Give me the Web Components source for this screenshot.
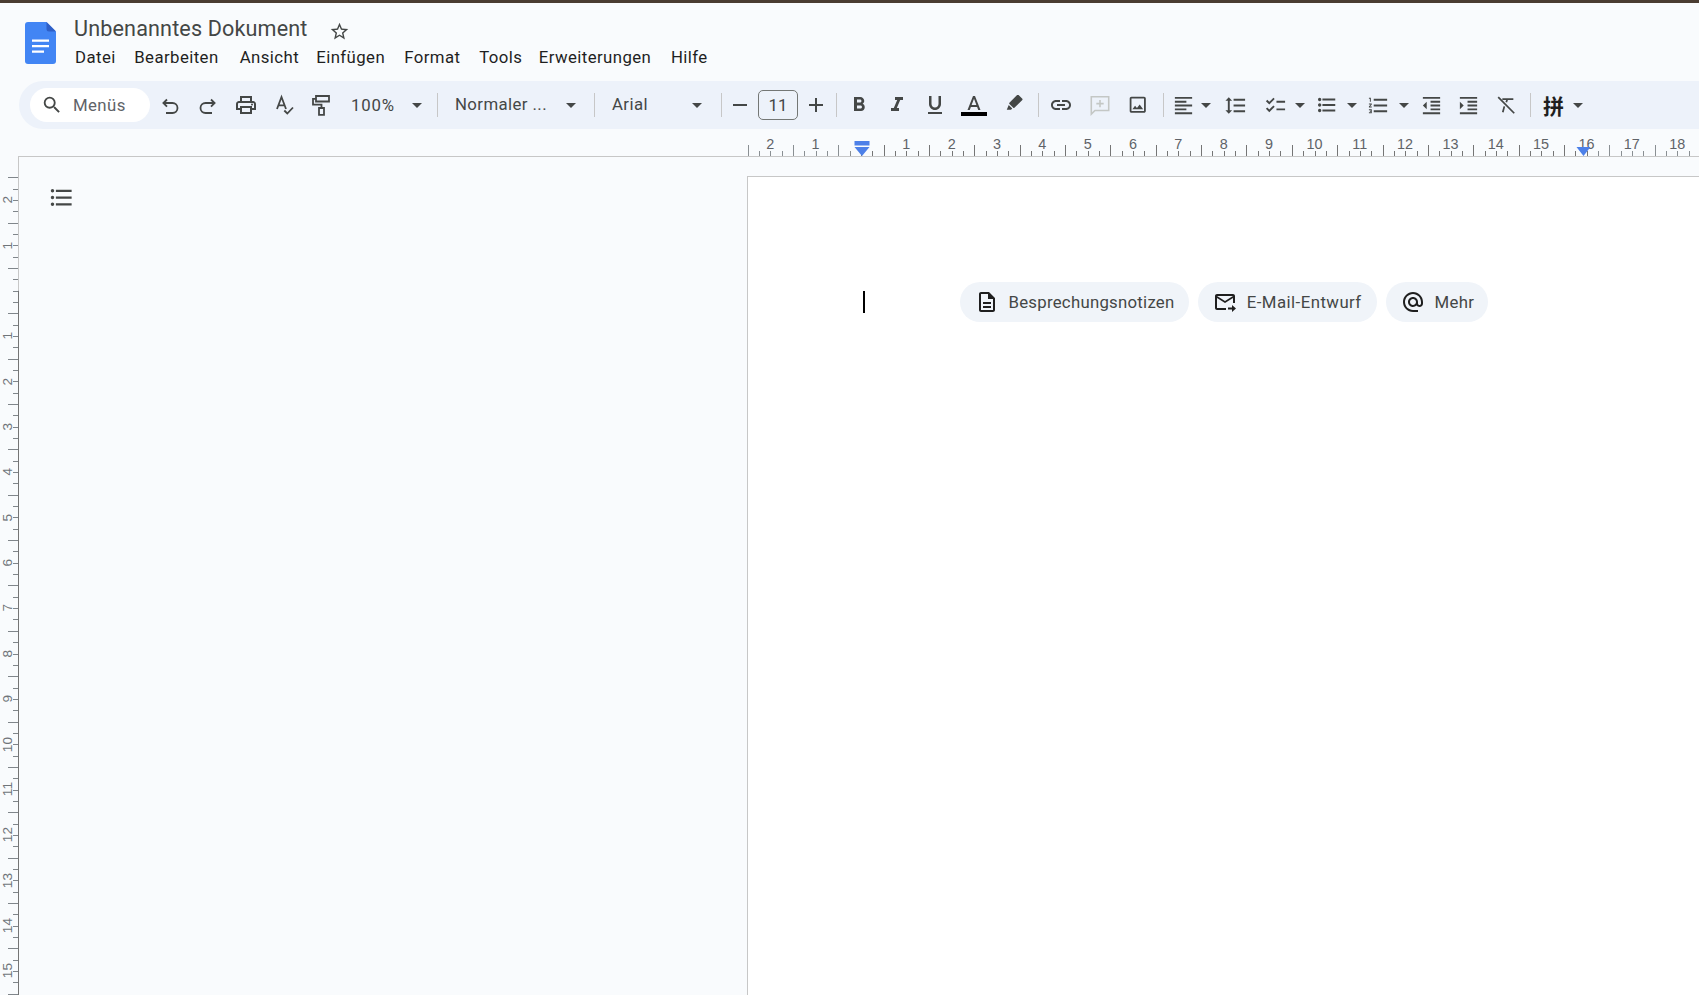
<!DOCTYPE html>
<html lang="de">
<head>
<meta charset="utf-8">
<title>Unbenanntes Dokument</title>
<style>
html,body{margin:0;padding:0;background:#f9fbfd;height:995px;overflow:hidden;font-family:Roboto,"Liberation Sans",sans-serif}
</style>
</head>
<body>
<doc-app>
  <doc-header slot="header" doc-title="Unbenanntes Dokument">
    <menu-item style="width:59.2px">Datei</menu-item><menu-item style="width:105.5px">Bearbeiten</menu-item><menu-item style="width:76.5px">Ansicht</menu-item><menu-item style="width:88px">Einfügen</menu-item><menu-item style="width:75px">Format</menu-item><menu-item style="width:59.5px">Tools</menu-item><menu-item style="width:132.2px">Erweiterungen</menu-item><menu-item style="width:40px">Hilfe</menu-item>
  </doc-header>
  <doc-toolbar slot="toolbar"></doc-toolbar>
  <doc-hruler slot="hruler"></doc-hruler>
  <doc-vruler slot="vruler"></doc-vruler>
  <doc-outline slot="outline"></doc-outline>
  <doc-page slot="page">
    <doc-chip icon="note" style="width:229px">Besprechungsnotizen</doc-chip>
    <doc-chip icon="mail" style="width:178.500px;letter-spacing:.45px">E-Mail-Entwurf</doc-chip>
    <doc-chip icon="at" style="width:102px">Mehr</doc-chip>
  </doc-page>
</doc-app>
<script>
const P = {
  search:'<path fill="currentColor" d="M15.5 14h-.79l-.28-.27A6.471 6.471 0 0 0 16 9.5 6.5 6.5 0 1 0 9.5 16c1.61 0 3.09-.59 4.23-1.57l.27.28v.79l5 4.99L20.49 19l-4.99-5zm-6 0C7.01 14 5 11.99 5 9.5S7.01 5 9.5 5 14 7.01 14 9.5 11.99 14 9.5 14z"/>',
  star:'<path fill="currentColor" d="M22 9.24l-7.19-.62L12 2 9.19 8.63 2 9.24l5.46 4.73L5.82 21 12 17.27 18.18 21l-1.63-7.03L22 9.24zM12 15.4l-3.76 2.27 1-4.28-3.32-2.88 4.38-.38L12 6.1l1.71 4.04 4.38.38-3.32 2.88 1 4.28L12 15.4z"/>',
  undo:'<path fill="none" stroke="currentColor" stroke-width="1.8" d="M9 6.5 5.4 10 9 13.6M5.4 10H14.500a5 5 0 0 1 0 10H8"/>',
  redo:'<path fill="none" stroke="currentColor" stroke-width="1.8" d="M15 6.500 18.600 10 15 13.600M18.600 10H9.500a5 5 0 0 0 0 10H16"/>',
  print:'<path fill="currentColor" d="M19 8h-1V3H6v5H5c-1.66 0-3 1.34-3 3v6h4v4h12v-4h4v-6c0-1.66-1.34-3-3-3zM8 5h8v3H8V5zm8 12v2H8v-4h8v2zm2-2v-2H6v2H4v-4c0-.55.45-1 1-1h14c.55 0 1 .45 1 1v4h-2z"/><circle fill="currentColor" cx="18" cy="11.500" r="1"/>',
  spell:'<path fill="none" stroke="currentColor" stroke-width="1.800" d="M4 16 8.500 4l4.500 12M5.500 12.300h6M11.300 17.500l3 3 5.700-6"/>',
  paint:'<path fill="none" stroke="currentColor" stroke-width="1.800" d="M7 3h13v5.500H7zM7 5.800H4v5.800H12.500V15M10 15h5v6.800h-5z"/>',
  minus:'<path fill="currentColor" d="M5 11h14v2H5z"/>',
  plus:'<path fill="currentColor" d="M19 13h-6v6h-2v-6H5v-2h6V5h2v6h6v2z"/>',
  bold:'<path fill="currentColor" d="M15.600 10.790c.97-.67 1.650-1.770 1.650-2.790 0-2.260-1.750-4-4-4H7v14h7.040c2.090 0 3.710-1.700 3.710-3.790 0-1.520-.86-2.820-2.150-3.420zM10 6.500h3c.83 0 1.500.67 1.500 1.500s-.67 1.500-1.500 1.500h-3v-3zm3.500 9H10v-3h3.500c.83 0 1.500.67 1.500 1.500s-.67 1.500-1.500 1.500z"/>',
  italic:'<path fill="currentColor" d="M10 4v3h2.210l-3.420 8H6v3h8v-3h-2.210l3.420-8H18V4z"/>',
  underline:'<path fill="currentColor" d="M12 17c3.310 0 6-2.690 6-6V3h-2.500v8c0 1.930-1.570 3.500-3.500 3.500S8.500 12.930 8.500 11V3H6v8c0 3.310 2.690 6 6 6zm-7 2v2h14v-2H5z"/>',
  color:'<path fill="currentColor" d="M11 3L5.500 17h2.250l1.120-3h6.250l1.120 3h2.250L13 3h-2zm-1.380 9L12 5.670 14.380 12H9.620z"/>',
  marker:'<path fill="currentColor" transform="translate(0,-2)" d="M17.300 1.800 22 6.500c.4.4.4 1 0 1.400L12.500 17.400c-.4.4-1 .4-1.400 0l-4.600-4.600c-.4-.4-.4-1 0-1.400l9.400-9.600c.5-.4 1.100-.4 1.400 0zM5.700 14l4.200 4.300-1.500 1.500H3.300z"/>',
  link:'<path fill="currentColor" d="M3.900 12c0-1.710 1.390-3.100 3.100-3.100h4V7H7c-2.760 0-5 2.240-5 5s2.240 5 5 5h4v-1.900H7c-1.710 0-3.100-1.390-3.100-3.100zM8 13h8v-2H8v2zm9-6h-4v1.900h4c1.710 0 3.100 1.390 3.100 3.100s-1.390 3.100-3.100 3.100h-4V17h4c2.760 0 5-2.240 5-5s-2.240-5-5-5z"/>',
  comment:'<path fill="none" stroke="currentColor" stroke-width="1.700" d="M2.500 3h19v15H6.500L2.500 22zM12 6.500v8M8 10.500h8"/>',
  image:'<path fill="currentColor" d="M19 5v14H5V5h14m0-2H5c-1.100 0-2 .9-2 2v14c0 1.100.9 2 2 2h14c1.100 0 2-.9 2-2V5c0-1.100-.9-2-2-2z"/><path fill="currentColor" d="M14.140 11.860l-3 3.870L9 13.140 6 17h12l-3.860-5.140z"/>',
  align:'<path fill="currentColor" d="M15 15H3v2h12v-2zm0-8H3v2h12V7zM3 13h18v-2H3v2zm0 8h18v-2H3v2zM3 3v2h18V3H3z"/>',
  spacing:'<path fill="currentColor" d="M6 7h2.500L5 3.500 1.500 7H4v10H1.500L5 20.500 8.500 17H6V7zm4-2v2h12V5H10zm0 14h12v-2H10v2zm0-6h12v-2H10v2z"/>',
  check:'<path fill="currentColor" d="M22 7h-9v2h9V7zm0 8h-9v2h9v-2zM5.540 11L2 7.460l1.410-1.410 2.120 2.120 4.240-4.240 1.410 1.410L5.540 11zm0 8L2 15.460l1.410-1.410 2.120 2.120 4.240-4.240 1.410 1.410L5.540 19z"/>',
  bullet:'<path fill="currentColor" d="M4 10.200c-1 0-1.800.8-1.800 1.800s.8 1.800 1.800 1.800 1.800-.8 1.800-1.800-.8-1.800-1.800-1.800zm0-6c-1 0-1.800.8-1.800 1.800S3 7.800 4 7.800 5.800 7 5.800 6 5 4.200 4 4.200zm0 12c-1 0-1.800.8-1.800 1.800s.8 1.800 1.800 1.800 1.800-.8 1.800-1.800-.8-1.800-1.800-1.800zM7 19h14v-2H7v2zm0-6h14v-2H7v2zm0-8v2h14V5H7z"/>',
  number:'<path fill="currentColor" d="M2 17h2v.5H3v1h1v.5H2v1h3v-4H2v1zm1-9h1V4H2v1h1v3zm-1 3h1.800L2 13.100v.9h3v-1H3.200L5 10.900V10H2v1zm5-6v2h14V5H7zm0 14h14v-2H7v2zm0-6h14v-2H7v2z"/>',
  outdent:'<path fill="currentColor" d="M11 17h10v-2H11v2zm-8-5l4 4V8l-4 4zm0 9h18v-2H3v2zM3 3v2h18V3H3zm8 6h10V7H11v2zm0 4h10v-2H11v2z"/>',
  indent:'<path fill="currentColor" d="M3 21h18v-2H3v2zM3 8v8l4-4-4-4zm8 9h10v-2H11v2zM3 3v2h18V3H3zm8 6h10V7H11v2zm0 4h10v-2H11v2z"/>',
  clear:'<path fill="none" stroke="currentColor" stroke-width="1.900" d="M3.500 3.500 21 21M8 5.500h12M13.500 5.500l-1.200 3.500M10.200 13.500 8.500 20"/>',
  list:'<path fill="currentColor" d="M4 10.500c-.83 0-1.500.67-1.500 1.500s.67 1.500 1.500 1.500 1.500-.67 1.500-1.500-.67-1.500-1.500-1.500zm0-6c-.83 0-1.500.67-1.500 1.500S3.170 7.500 4 7.500 5.500 6.830 5.500 6 4.830 4.500 4 4.500zm0 12c-.83 0-1.500.68-1.500 1.500s.68 1.500 1.500 1.500 1.500-.68 1.500-1.500-.67-1.500-1.500-1.500zM7 19h14v-2H7v2zm0-6h14v-2H7v2zm0-8v2h14V5H7z"/>',
  note:'<path fill="currentColor" d="M14 2H6c-1.100 0-2 .9-2 2v16c0 1.100.9 2 2 2h12c1.100 0 2-.9 2-2V8l-6-6zm4 18H6V4h7v5h5v11zM8 12h8v2H8zm0 4h8v2H8z"/>',
  mail:'<path fill="currentColor" d="M20 4H4c-1.100 0-2 .9-2 2v12c0 1.100.9 2 2 2h9v-2H4V8l8 5 8-5v5h2V6c0-1.100-.9-2-2-2zm-8 7L4 6h16l-8 5zm7 4l4 3.500-4 3.500v-2.500h-4v-2h4V15z"/>',
  at:'<path fill="currentColor" d="M12 2C6.480 2 2 6.480 2 12s4.480 10 10 10h5v-2h-5c-4.340 0-8-3.660-8-8s3.660-8 8-8 8 3.660 8 8v1.430c0 .79-.71 1.570-1.500 1.570s-1.500-.78-1.500-1.570V12c0-2.760-2.240-5-5-5s-5 2.240-5 5 2.240 5 5 5c1.380 0 2.640-.56 3.540-1.470.65.89 1.770 1.470 2.960 1.470 1.970 0 3.500-1.600 3.500-3.570V12c0-5.520-4.480-10-10-10zm0 13c-1.660 0-3-1.340-3-3s1.340-3 3-3 3 1.340 3 3-1.340 3-3 3z"/>'
};
const svg = (n,s=24,vb='0 0 24 24',h=s)=>`<svg xmlns="http://www.w3.org/2000/svg" width="${s}" height="${h}" viewBox="${vb}" style="display:block;flex:none">${P[n]}</svg>`;

class DocApp extends HTMLElement{constructor(){super();this.attachShadow({mode:'open'}).innerHTML=`
<style>
:host{display:flex;flex-direction:column;width:1699px;height:995px;overflow:hidden;background:#f9fbfd}
.strip{height:3px;background:#4a3c32;flex:none}
.main{display:flex;flex:1;min-height:0}
</style>
<div class="strip"></div>
<slot name="header"></slot>
<slot name="toolbar"></slot>
<slot name="hruler"></slot>
<div class="main"><slot name="vruler"></slot><slot name="outline"></slot><slot name="page"></slot></div>`}}
customElements.define('doc-app',DocApp);

class DocHeader extends HTMLElement{constructor(){super();this.attachShadow({mode:'open'}).innerHTML=`
<style>
:host{display:flex;height:78px;flex:none;box-sizing:border-box;padding:19px 0 0 25px}
.logo{flex:none;margin-right:18px}
.col{display:flex;flex-direction:column;margin-top:-6.500px}
.top{display:flex;align-items:center;height:26px}
.t{font:400 21.6px/26px Roboto,"Liberation Sans",sans-serif;color:#444746;letter-spacing:.14px;white-space:nowrap}
.star{margin-left:21.500px;color:#444746;margin-top:5px}
.menu{display:flex;margin-top:4px;margin-left:1px}
</style>
<svg class="logo" width="31" height="42" viewBox="0 0 31 42">
 <path fill="#4285f4" d="M3 0h18.500L31 9.500V39a3 3 0 0 1-3 3H3a3 3 0 0 1-3-3V3a3 3 0 0 1 3-3z"/>
 <path fill="#2f5fc7" d="M21.500 0 31 9.500h-7a2.500 2.500 0 0 1-2.500-2.500z"/>
 <path fill="#fff" d="M7 17.500h17v2.300H7zM7 23h17v2.300H7zM7 28.500h12v2.300H7z"/>
</svg>
<div class="col">
 <div class="top"><span class="t"></span><span class="star">${svg('star',21)}</span></div>
 <div class="menu"><slot></slot></div>
</div>`;
this.shadowRoot.querySelector('.t').textContent=this.getAttribute('doc-title')}}
customElements.define('doc-header',DocHeader);

class MenuItem extends HTMLElement{constructor(){super();this.attachShadow({mode:'open'}).innerHTML=`
<style>:host{display:block;flex:none;font:400 16.8px/22px Roboto,"Liberation Sans",sans-serif;letter-spacing:.42px;color:#1f1f1f;white-space:nowrap}</style><slot></slot>`}}
customElements.define('menu-item',MenuItem);

class TbIcon extends HTMLElement{constructor(){super();this.attachShadow({mode:'open'})}
connectedCallback(){const n=this.getAttribute('name'),s=+(this.getAttribute('size')||24),c=this.getAttribute('color')||'#444746';
this.shadowRoot.innerHTML=`<style>:host{display:block;color:${c};flex:none;width:${s}px;height:${s}px}</style>${svg(n,s)}`}}
customElements.define('tb-icon',TbIcon);

class TbCaret extends HTMLElement{constructor(){super();this.attachShadow({mode:'open'}).innerHTML=`<style>:host{display:block;flex:none;width:0;height:0;border-left:5px solid transparent;border-right:5px solid transparent;border-top:5px solid #444746;margin-top:1px}</style>`}}
customElements.define('tb-caret',TbCaret);

class TbDivider extends HTMLElement{constructor(){super();this.attachShadow({mode:'open'}).innerHTML=`<style>:host{display:block;flex:none;width:1px;height:24px;background:#c7c7c7}</style>`}}
customElements.define('tb-divider',TbDivider);

class TbText extends HTMLElement{constructor(){super();this.attachShadow({mode:'open'}).innerHTML=`<style>:host{display:block;flex:none;font:400 16.8px/22px Roboto,"Liberation Sans",sans-serif;letter-spacing:.4px;color:#444746;white-space:nowrap}</style><slot></slot>`}}
customElements.define('tb-text',TbText);

class TbSearch extends HTMLElement{constructor(){super();this.attachShadow({mode:'open'}).innerHTML=`
<style>:host{display:flex;align-items:center;flex:none;box-sizing:border-box;width:120px;height:34px;background:#fff;border-radius:17px;padding-left:11px;gap:10px;font:400 16.8px/22px Roboto,"Liberation Sans",sans-serif;letter-spacing:.4px;color:#5f6368}
svg{color:#444746}</style>${svg('search',22)}<span>Menüs</span>`}}
customElements.define('tb-search',TbSearch);

class TbSize extends HTMLElement{constructor(){super();this.attachShadow({mode:'open'}).innerHTML=`
<style>:host{display:flex;align-items:center;justify-content:center;flex:none;box-sizing:border-box;width:40px;height:30px;border:1px solid #747775;border-radius:5px;font:400 16.8px/22px Roboto,"Liberation Sans",sans-serif;color:#444746}</style>11`}}
customElements.define('tb-size',TbSize);

class TbColor extends HTMLElement{constructor(){super();this.attachShadow({mode:'open'}).innerHTML=`
<style>:host{display:flex;flex-direction:column;align-items:center;flex:none;width:26px;height:24px;color:#444746}
.bar{width:26px;height:4px;background:#000;margin-top:0}</style>${svg('color',24,'0 0 24 19',19)}<div class="bar"></div>`}}
customElements.define('tb-color',TbColor);

class TbPinyin extends HTMLElement{constructor(){super();this.attachShadow({mode:'open'}).innerHTML=`
<style>:host{display:block;flex:none;font:700 21px/24px "Noto Sans CJK SC",sans-serif;color:#1f1f1f}</style>拼`}}
customElements.define('tb-pinyin',TbPinyin);

class DocToolbar extends HTMLElement{constructor(){super();
 const root=this.attachShadow({mode:'open'});
 root.innerHTML=`<style>:host{display:flex;align-items:center;flex:none;height:48px;margin-left:19px;background:#edf2fa;border-radius:24px 0 0 24px}</style>`;
 // [tag, left edge on the page, width, attributes, text]
 const ic=(name,cx,size=24,color)=>['tb-icon',cx-size/2,size,{name,size,...(color?{color}:{})}];
 const car=cx=>['tb-caret',cx-5,10];
 const div=x=>['tb-divider',x,1];
 const items=[
  ['tb-search',30,120],
  ic('undo',170),ic('redo',207.5),ic('print',246),ic('spell',284.5),ic('paint',320.5),
  ['tb-text',351,43,{},'100%'],car(417),div(437),
  ['tb-text',455,89,{},'Normaler ...'],car(571),div(593.5),
  ['tb-text',612,35,{},'Arial'],car(697),div(720.5),
  ic('minus',739.5),['tb-size',758,40],ic('plus',816),div(835.5),
  ic('bold',858.6),ic('italic',897),ic('underline',935),['tb-color',961,26],ic('marker',1014,20),div(1038),
  ic('link',1061.5),ic('comment',1100,22,'#c4c7c5'),ic('image',1138,21.5),div(1163.5),
  ic('align',1184,23),car(1206),ic('spacing',1236,23),ic('check',1276,23),car(1300),ic('bullet',1327.5,22),car(1352),ic('number',1379,23),car(1404),
  ic('outdent',1431.5,23),ic('indent',1469,23),ic('clear',1506,22),div(1530.5),
  ['tb-pinyin',1543,21],car(1578)
 ];
 let right=19;
 for(const [tag,left,w,attrs,text] of items){
  const e=document.createElement(tag);
  for(const k in (attrs||{}))e.setAttribute(k,attrs[k]);
  if(text)e.textContent=text;
  e.style.marginLeft=(left-right)+'px';
  e.style.width=w+'px';
  if(tag==='tb-caret')e.style.width='0';
  if(tag==='tb-text'&&text==='100%')e.style.letterSpacing='.8px';
  if(tag==='tb-text'&&text!=='100%')e.style.marginBottom='2px';
  root.appendChild(e);
  right=left+w;
 }
}}
customElements.define('doc-toolbar',DocToolbar);

const STEP=45.35, QUARTER=STEP/4;

class DocHRuler extends HTMLElement{constructor(){super();
 const X0=18, ORIGIN=861-X0, MARK=862-X0, END=1583.500-X0, W=1699-X0, H=27;
 let t='';
 for(let k=-10;ORIGIN+k*QUARTER<W;k++){
  const x=Math.round(ORIGIN+k*QUARTER)+.5, tall=((k%4)+4)%4===2;
  t+=`<path d="M${x} ${H}V${tall?H-11:H-5}" stroke="${(k<0||k>64)?'#8a8f93':'#757575'}" stroke-width="1"/>`;
 }
 let d='';
 for(const n of [2,1,'',...Array.from({length:18},(_,i)=>i+1)])d+=`<span>${n}</span>`;
 this.attachShadow({mode:'open'}).innerHTML=`
<style>
:host{display:block;position:relative;flex:none;height:27px;margin-left:18px;border-bottom:1px solid #c7c7c7;overflow:hidden}
.digits{display:flex;padding:8px 0 0 ${747.6-X0}px;font:400 14.400px/14px "Liberation Sans",sans-serif;color:#5f6368}
.digits span{flex:0 0 ${STEP}px;text-align:center}
.ticks,.mark{position:absolute;left:0;top:0}
</style>
<div class="digits">${d}</div>
<svg class="ticks" width="${W}" height="28">${t}<path d="M${ORIGIN} 27.500H${END}" stroke="#757575"/></svg>
<svg class="mark" width="${W}" height="28">
 <path fill="#4d80e8" d="M${MARK-7.500} 12h15v4.500h-15zM${MARK-7.500} 18h15L${MARK} 27zM${END-7} 18h14L${END} 27z"/>
</svg>`}}
customElements.define('doc-hruler',DocHRuler);

class DocVRuler extends HTMLElement{constructor(){super();
 const Y0=157, ORIGIN=290.7-Y0, H=995-Y0;
 let t='';
 for(let k=-10;ORIGIN+k*QUARTER<H;k++){
  const y=Math.round(ORIGIN+k*QUARTER)+.5, tall=((k%4)+4)%4===2;
  t+=`<path d="M${tall?8:13} ${y}H18" stroke="#80868b"/>`;
 }
 let d='';
 for(const n of [2,1,'',...Array.from({length:15},(_,i)=>i+1)])d+=`<div><span>${n}</span></div>`;
 this.attachShadow({mode:'open'}).innerHTML=`
<style>
:host{display:block;position:relative;flex:none;width:19px;box-sizing:border-box}
.digits{box-sizing:border-box;width:16px;padding-top:${ORIGIN-2.5*STEP}px;font:400 13.600px/16px "Liberation Sans",sans-serif;color:#70757a}
.digits div{height:${STEP}px;display:flex;align-items:center;justify-content:center}
.digits span{display:block;writing-mode:vertical-rl;transform:rotate(180deg);white-space:nowrap}
svg{position:absolute;left:0;top:0}
</style>
<div class="digits">${d}</div>
<svg width="19" height="${H}">${t}<path d="M18.500 0V${ORIGIN}" stroke="#c7c7c7"/><path d="M18.500 ${ORIGIN}V${H}" stroke="#757575"/></svg>`}}
customElements.define('doc-vruler',DocVRuler);

class DocOutline extends HTMLElement{constructor(){super();this.attachShadow({mode:'open'}).innerHTML=`
<style>:host{display:block;flex:none;width:728px;box-sizing:border-box;padding:27px 0 0 29px;color:#444746}</style>${svg('list',27)}`}}
customElements.define('doc-outline',DocOutline);

class DocPage extends HTMLElement{constructor(){super();this.attachShadow({mode:'open'}).innerHTML=`
<style>
:host{display:flex;align-items:flex-start;flex:1;box-sizing:border-box;margin-top:19px;background:#fff;border-top:1px solid #c7c7c7;border-left:1px solid #c7c7c7;padding:105px 0 0 114.500px}
.cursor{width:2px;height:22px;background:#000;margin-top:9px;margin-right:95.500px;flex:none}
.chips{display:flex;gap:9.300px}
</style>
<div class="cursor"></div><div class="chips"><slot></slot></div>`}}
customElements.define('doc-page',DocPage);

class DocChip extends HTMLElement{constructor(){super();this.attachShadow({mode:'open'}).innerHTML=`
<style>
:host{display:flex;align-items:center;box-sizing:border-box;height:39.500px;padding:0 0 0 15px;gap:9.500px;background:#f0f4f9;border-radius:20px;font:400 16.800px/22px Roboto,"Liberation Sans",sans-serif;letter-spacing:.25px;color:#444746;white-space:nowrap}
svg{color:#1f1f1f}
</style>${svg(this.getAttribute('icon'),24)}<slot></slot>`}}
customElements.define('doc-chip',DocChip);
</script>
</body>
</html>
